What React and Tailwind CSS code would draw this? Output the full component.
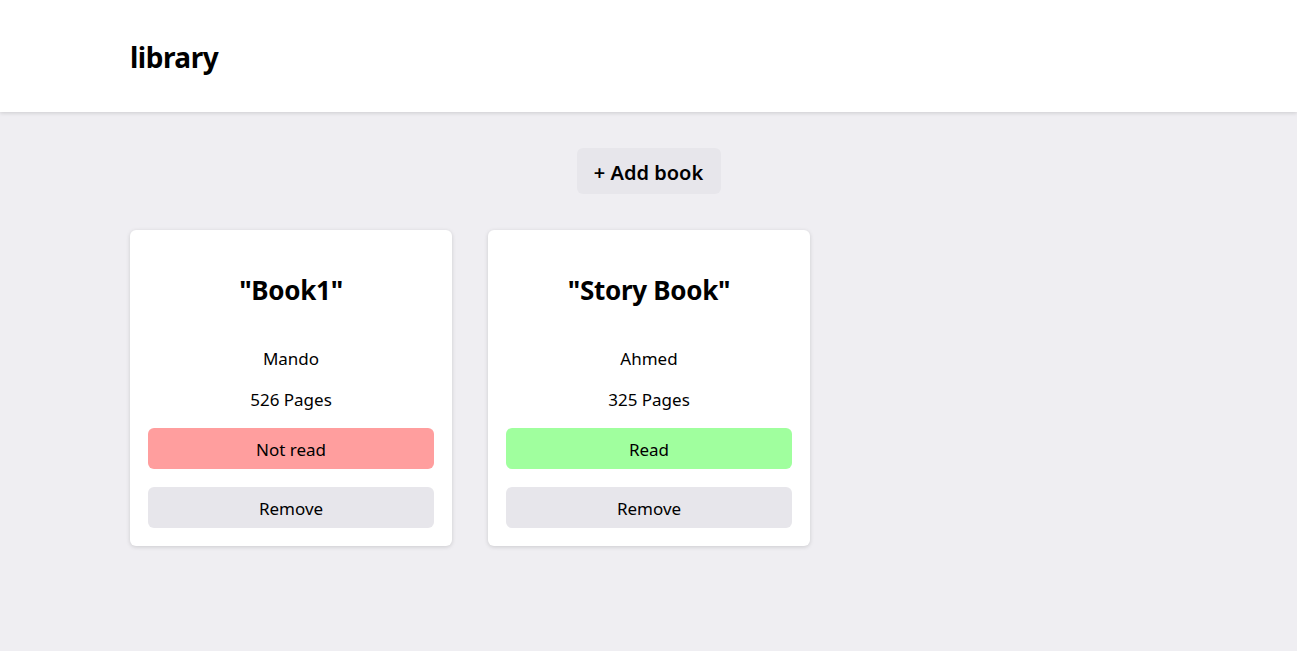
export default function App() {
  const books = [
    { title: '"Book1"', author: "Mando", pages: 526, read: false },
    { title: '"Story Book"', author: "Ahmed", pages: 325, read: true },
  ];
  return (
    <div className="min-h-[651px] bg-[#efeef2] text-black" style={{ fontFamily: '"Noto Sans", "Open Sans", sans-serif' }}>
      <header className="h-[112px] bg-white shadow-[0_1px_4px_rgba(0,0,0,0.15)] flex items-center px-[130px] pt-[2px]">
        <h1 className="text-[28px] font-bold leading-none tracking-[-0.5px]">library</h1>
      </header>
      <main className="px-[130px] pt-[36px]">
        <div className="flex justify-center">
          <button className="h-[46px] w-[144px] rounded-md bg-[#e7e6eb] pt-[3px] text-[20px] font-semibold leading-none">
            + Add book
          </button>
        </div>
        <div className="mt-[36px] flex gap-[36px]">
          {books.map((b) => (
            <div key={b.author} className="w-[322px] rounded-md bg-white p-[18px] shadow-[0_1px_4px_rgba(0,0,0,0.15)] flex flex-col text-center">
              <h2 className="mt-[24px] h-[36px] leading-[36px] text-[26px] font-bold tracking-[-0.3px]">{b.title}</h2>
              <p className="mt-[39px] h-[24px] leading-[24px] text-[17px]">{b.author}</p>
              <p className="mt-[17px] h-[24px] leading-[24px] text-[17px]">{b.pages} Pages</p>
              <button className={`mt-[16px] h-[41px] rounded-md pt-[2px] text-[17px] ${b.read ? "bg-[#a0ff9e]" : "bg-[#ff9e9e]"}`}>
                {b.read ? "Read" : "Not read"}
              </button>
              <button className="mt-[18px] h-[41px] rounded-md bg-[#e7e6eb] pt-[2px] text-[17px]">Remove</button>
            </div>
          ))}
        </div>
      </main>
    </div>
  );
}
